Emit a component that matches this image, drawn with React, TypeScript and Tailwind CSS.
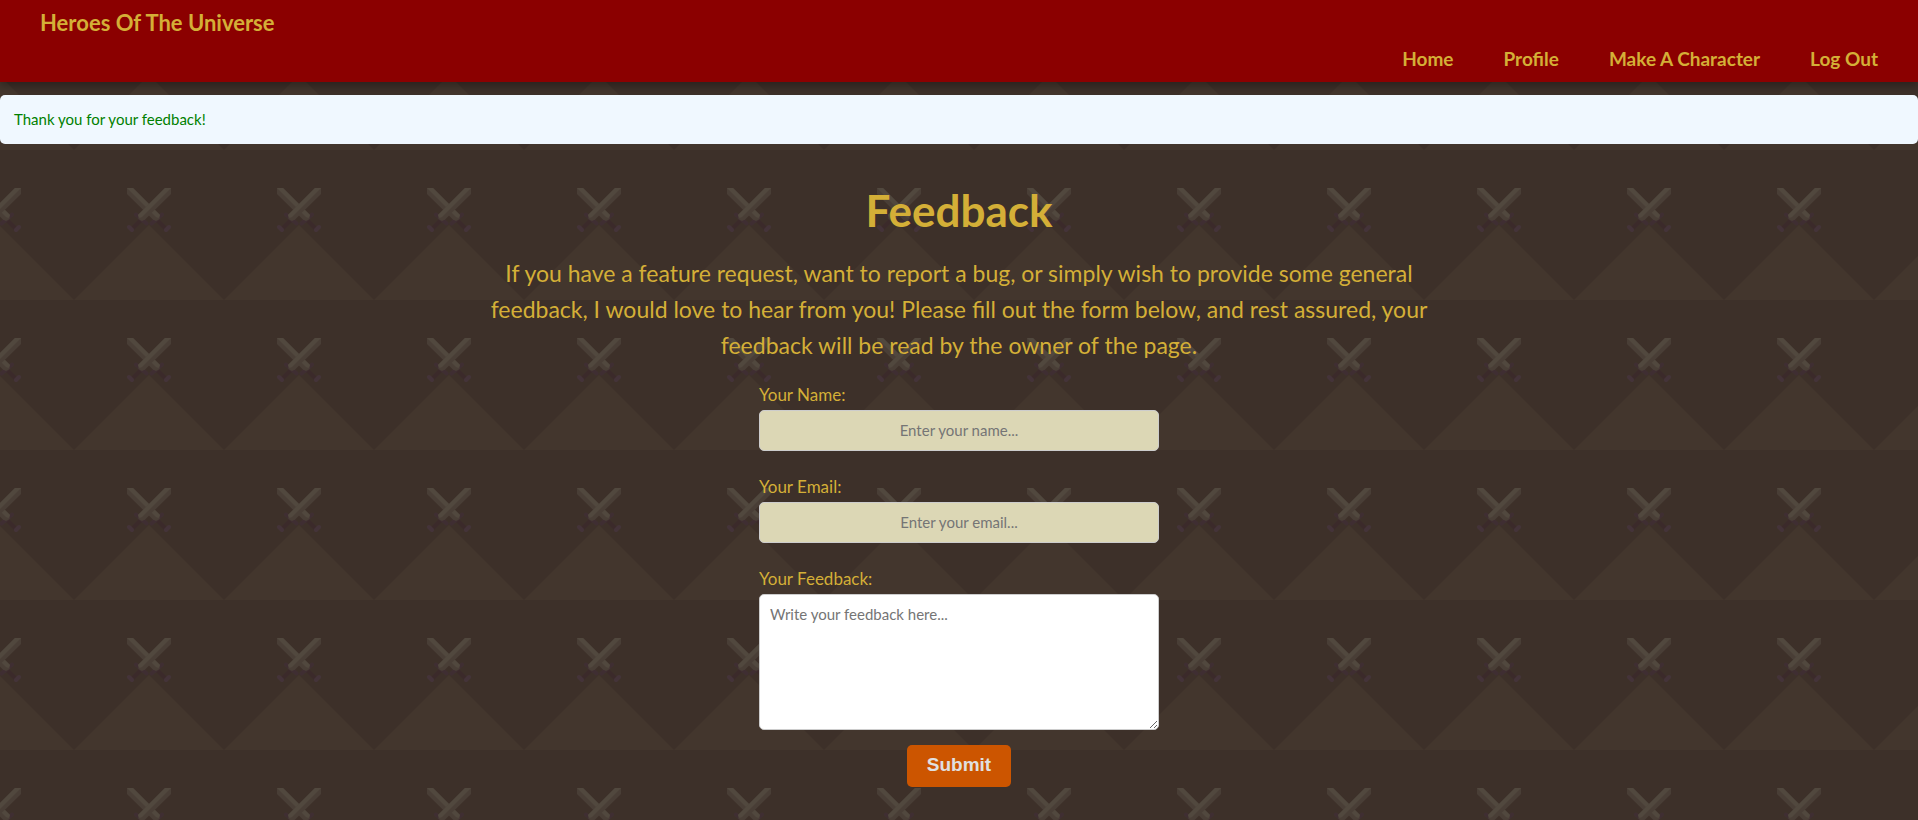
import React from "react";

const navLinks = ["Home", "Profile", "Make A Character", "Log Out"];

function Blade() {
  return (
    <g>
      <path d="M44 0V6L18 31.500L15 33L11.500 31L11 27L38 0Z" fill="#493e36" />
      <path d="M44 0H38L11 27L12.500 30L15 29Z" fill="#51483e" />
    </g>
  );
}

function Hilt() {
  return (
    <g>
      <path d="M12 31L15 34L7 42L4 39Z" fill="#3b2a2a" />
      <path d="M9 26.500L19.500 35.500" stroke="#3f2e32" strokeWidth="4" strokeLinecap="round" />
      <path d="M2 39L5 42" stroke="#443339" strokeWidth="4" strokeLinecap="round" />
    </g>
  );
}

function SwordBackdrop() {
  return (
    <svg aria-hidden="true" className="absolute inset-0 -z-10 h-full w-full">
      <defs>
        <pattern id="swords" x="74" y="0" width="150" height="150" patternUnits="userSpaceOnUse">
          <rect width="150" height="150" fill="#3d3029" />
          <path d="M75 75L150 150H0Z" fill="#43362d" />
          <g transform="translate(53 38)">
            <g transform="matrix(-1 0 0 1 44 0)">
              <Hilt />
              <Blade />
            </g>
            <Hilt />
            <Blade />
          </g>
        </pattern>
      </defs>
      <rect width="100%" height="100%" fill="url(#swords)" />
    </svg>
  );
}

function TextField({ id, label, type, placeholder }: { id: string; label: string; type: string; placeholder: string }) {
  return (
    <div className="mb-5 flex flex-col">
      <label htmlFor={id} className="text-[17px] leading-[31px]">
        {label}
      </label>
      <input
        id={id}
        type={type}
        placeholder={placeholder}
        className="h-[41px] rounded-[5px] border border-[#cccccc] bg-[#dcd7b5] px-2.5 pb-0.5 text-center text-[15px] text-gray-800 placeholder:text-[#757575]"
      />
    </div>
  );
}

export default function App() {
  return (
    <div className="relative isolate min-h-screen bg-[#3d3029] font-['Lato',sans-serif] text-[#d4af37]">
      <SwordBackdrop />
      <header className="bg-[#8b0000] px-10 pt-1 pb-1.5 font-bold shadow-[0_4px_8px_rgba(0,0,0,0.3)]">
        <a href="#" className="block w-fit text-[22px] leading-[38px]">
          Heroes Of The Universe
        </a>
        <nav className="flex justify-end gap-[50px] text-[19px] leading-[34px]">
          {navLinks.map((link) => (
            <a key={link} href="#">
              {link}
            </a>
          ))}
        </nav>
      </header>

      <p role="status" className="mt-[13px] rounded-[5px] bg-[#f0f8ff] px-3.5 text-[15px] leading-[49px] text-[#008000]">
        Thank you for your feedback!
      </p>

      <main className="flex flex-col items-center px-4 pt-9 pb-8">
        <h1 className="text-[44px] leading-[60px] font-bold">Feedback</h1>
        <p className="mt-[15px] max-w-[950px] text-center text-[23px] leading-9">
          If you have a feature request, want to report a bug, or simply wish to provide some general feedback, I would
          love to hear from you! Please fill out the form below, and rest assured, your feedback will be read by the
          owner of the page.
        </p>
        <form className="mt-4 flex w-full max-w-[400px] flex-col" onSubmit={(event) => event.preventDefault()}>
          <TextField id="name" label="Your Name:" type="text" placeholder="Enter your name..." />
          <TextField id="email" label="Your Email:" type="email" placeholder="Enter your email..." />
          <label htmlFor="feedback" className="text-[17px] leading-[31px]">
            Your Feedback:
          </label>
          <textarea
            id="feedback"
            placeholder="Write your feedback here..."
            className="h-[136px] resize rounded-[5px] border border-[#cccccc] bg-white px-2.5 py-2 text-[15px] text-gray-800 placeholder:text-[#757575]"
          />
          <button
            type="submit"
            className="mt-[15px] h-[42px] self-center rounded-[5px] bg-[#cc5500] px-5 pb-0.5 font-['Liberation_Sans',sans-serif] text-[19px] font-bold text-[#e0e0e0]"
          >
            Submit
          </button>
        </form>
      </main>
    </div>
  );
}
